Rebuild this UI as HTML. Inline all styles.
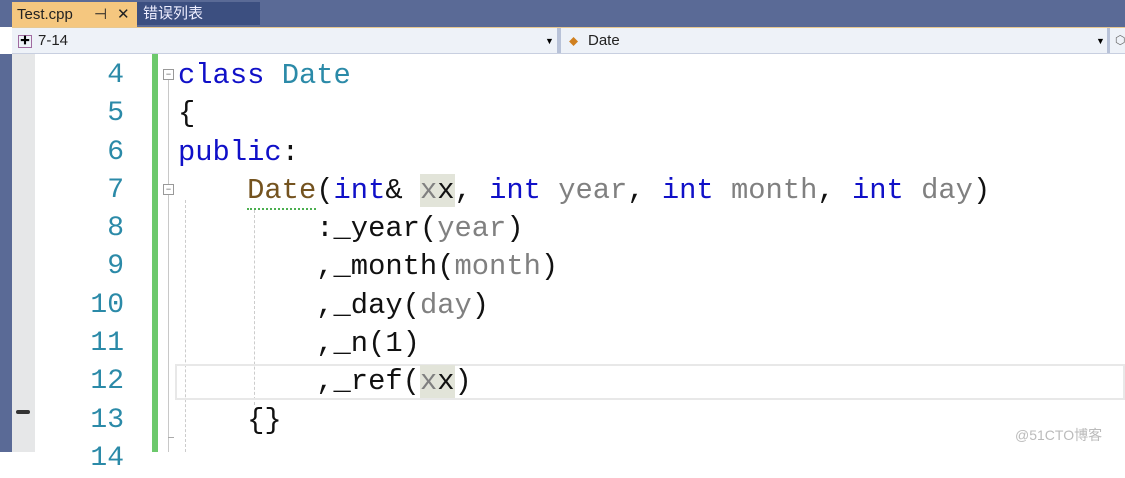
<!DOCTYPE html>
<html><head><meta charset="utf-8"><style>
body{margin:0;width:1125px;height:452px;overflow:hidden;background:#fff;position:relative;font-family:"Liberation Sans","Noto Sans CJK SC",sans-serif}
.a{position:absolute}
.code{position:absolute;left:178px;top:57px;font-family:"Liberation Mono",monospace;font-size:28.8px;line-height:38.3px;white-space:pre;color:#111}
.ln{position:absolute;left:40px;width:84px;top:57px;text-align:right;font-family:"Liberation Mono",monospace;font-size:28px;line-height:38.3px;color:#2b8aa8;white-space:pre}
.k{color:#1010c8}.t{color:#2b8aa8}.p{color:#808080}.f{color:#74531f}
.hl{background:#e2e4d9}
</style></head><body>
<div class="a" style="left:0;top:0;width:1125px;height:27px;background:#5a6a96"></div>
<div class="a" style="left:12px;top:2px;width:125px;height:25px;background:#f5c77f;font-size:15px;line-height:25px;color:#222"><span style="margin-left:5px">Test.cpp</span><span style="position:absolute;left:82px">⊣</span><span style="position:absolute;left:105px">✕</span></div>
<div class="a" style="left:137px;top:2px;width:123px;height:23px;background:#3c4f80;color:#eef;font-size:15px;line-height:23px;padding-left:6px;box-sizing:border-box">错误列表</div>
<div class="a" style="left:12px;top:27px;width:1113px;height:27px;background:#eef2f8;border-bottom:1px solid #c8cfe0;border-top:1px solid #e8c890;box-sizing:border-box"></div>
<div class="a" style="left:18px;top:35px;width:14px;height:13px;border:1px solid #a06aa0;box-sizing:border-box;font-size:10px;line-height:11px;text-align:center">✚</div>
<div class="a" style="left:38px;top:32px;font-size:15px;color:#222">7-14</div>
<div class="a" style="left:545px;top:36px;font-size:9px">▼</div>
<div class="a" style="left:557px;top:28px;width:4px;height:25px;background:#b8c2d8"></div>
<div class="a" style="left:569px;top:33px;font-size:13px;color:#d08020">⬥</div>
<div class="a" style="left:588px;top:32px;font-size:15px;color:#222">Date</div>
<div class="a" style="left:1096px;top:36px;font-size:9px">▼</div>
<div class="a" style="left:1107px;top:28px;width:3px;height:25px;background:#b8c2d8"></div>
<div class="a" style="left:1115px;top:33px;font-size:12px;color:#666">⬡</div>
<div class="a" style="left:0;top:54px;width:12px;height:398px;background:#5a6a96"></div>
<div class="a" style="left:12px;top:54px;width:23px;height:398px;background:#e6e7e8"></div>
<div class="a" style="left:16px;top:410px;width:14px;height:4px;background:#333;border-radius:2px"></div>
<div class="a" style="left:152px;top:54px;width:6px;height:398px;background:#6cc96c"></div>
<div class="a" style="left:168px;top:80px;width:1px;height:372px;background:#c8c8c8"></div>
<div class="a" style="left:163px;top:69px;width:9px;height:9px;border:1px solid #999;background:#fff;font-size:9px;line-height:8px;text-align:center;color:#555">−</div>
<div class="a" style="left:163px;top:184px;width:9px;height:9px;border:1px solid #999;background:#fff;font-size:9px;line-height:8px;text-align:center;color:#555">−</div>
<div class="a" style="left:168px;top:437px;width:6px;height:1px;background:#aaa"></div>
<div class="a" style="left:185px;top:200px;width:0;height:252px;border-left:1px dashed #ccc"></div>
<div class="a" style="left:254px;top:210px;width:0;height:195px;border-left:1px dashed #ccc"></div>
<div class="a" style="left:175px;top:364px;width:950px;height:36px;border:2px solid #e8e8e8;box-sizing:border-box"></div>
<div class="a" style="left:247px;top:204px;width:69px;height:4px;border-bottom:2px dotted #4caf50"></div>
<div class="ln">4
5
6
7
8
9
10
11
12
13
14</div>
<div class="code"><span class="k">class</span> <span class="t">Date</span>
{
<span class="k">public</span>:
    <span class="f">Date</span>(<span class="k">int</span>&amp; <span class="hl"><span class="p">x</span>x</span>, <span class="k">int</span> <span class="p">year</span>, <span class="k">int</span> <span class="p">month</span>, <span class="k">int</span> <span class="p">day</span>)
        :_year(<span class="p">year</span>)
        ,_month(<span class="p">month</span>)
        ,_day(<span class="p">day</span>)
        ,_n(1)
        ,_ref(<span class="hl"><span class="p">x</span>x</span>)
    {}</div>
<div class="a" style="left:1015px;top:425px;font-size:14px;color:#bbb">@51CTO博客</div>
</body></html>
